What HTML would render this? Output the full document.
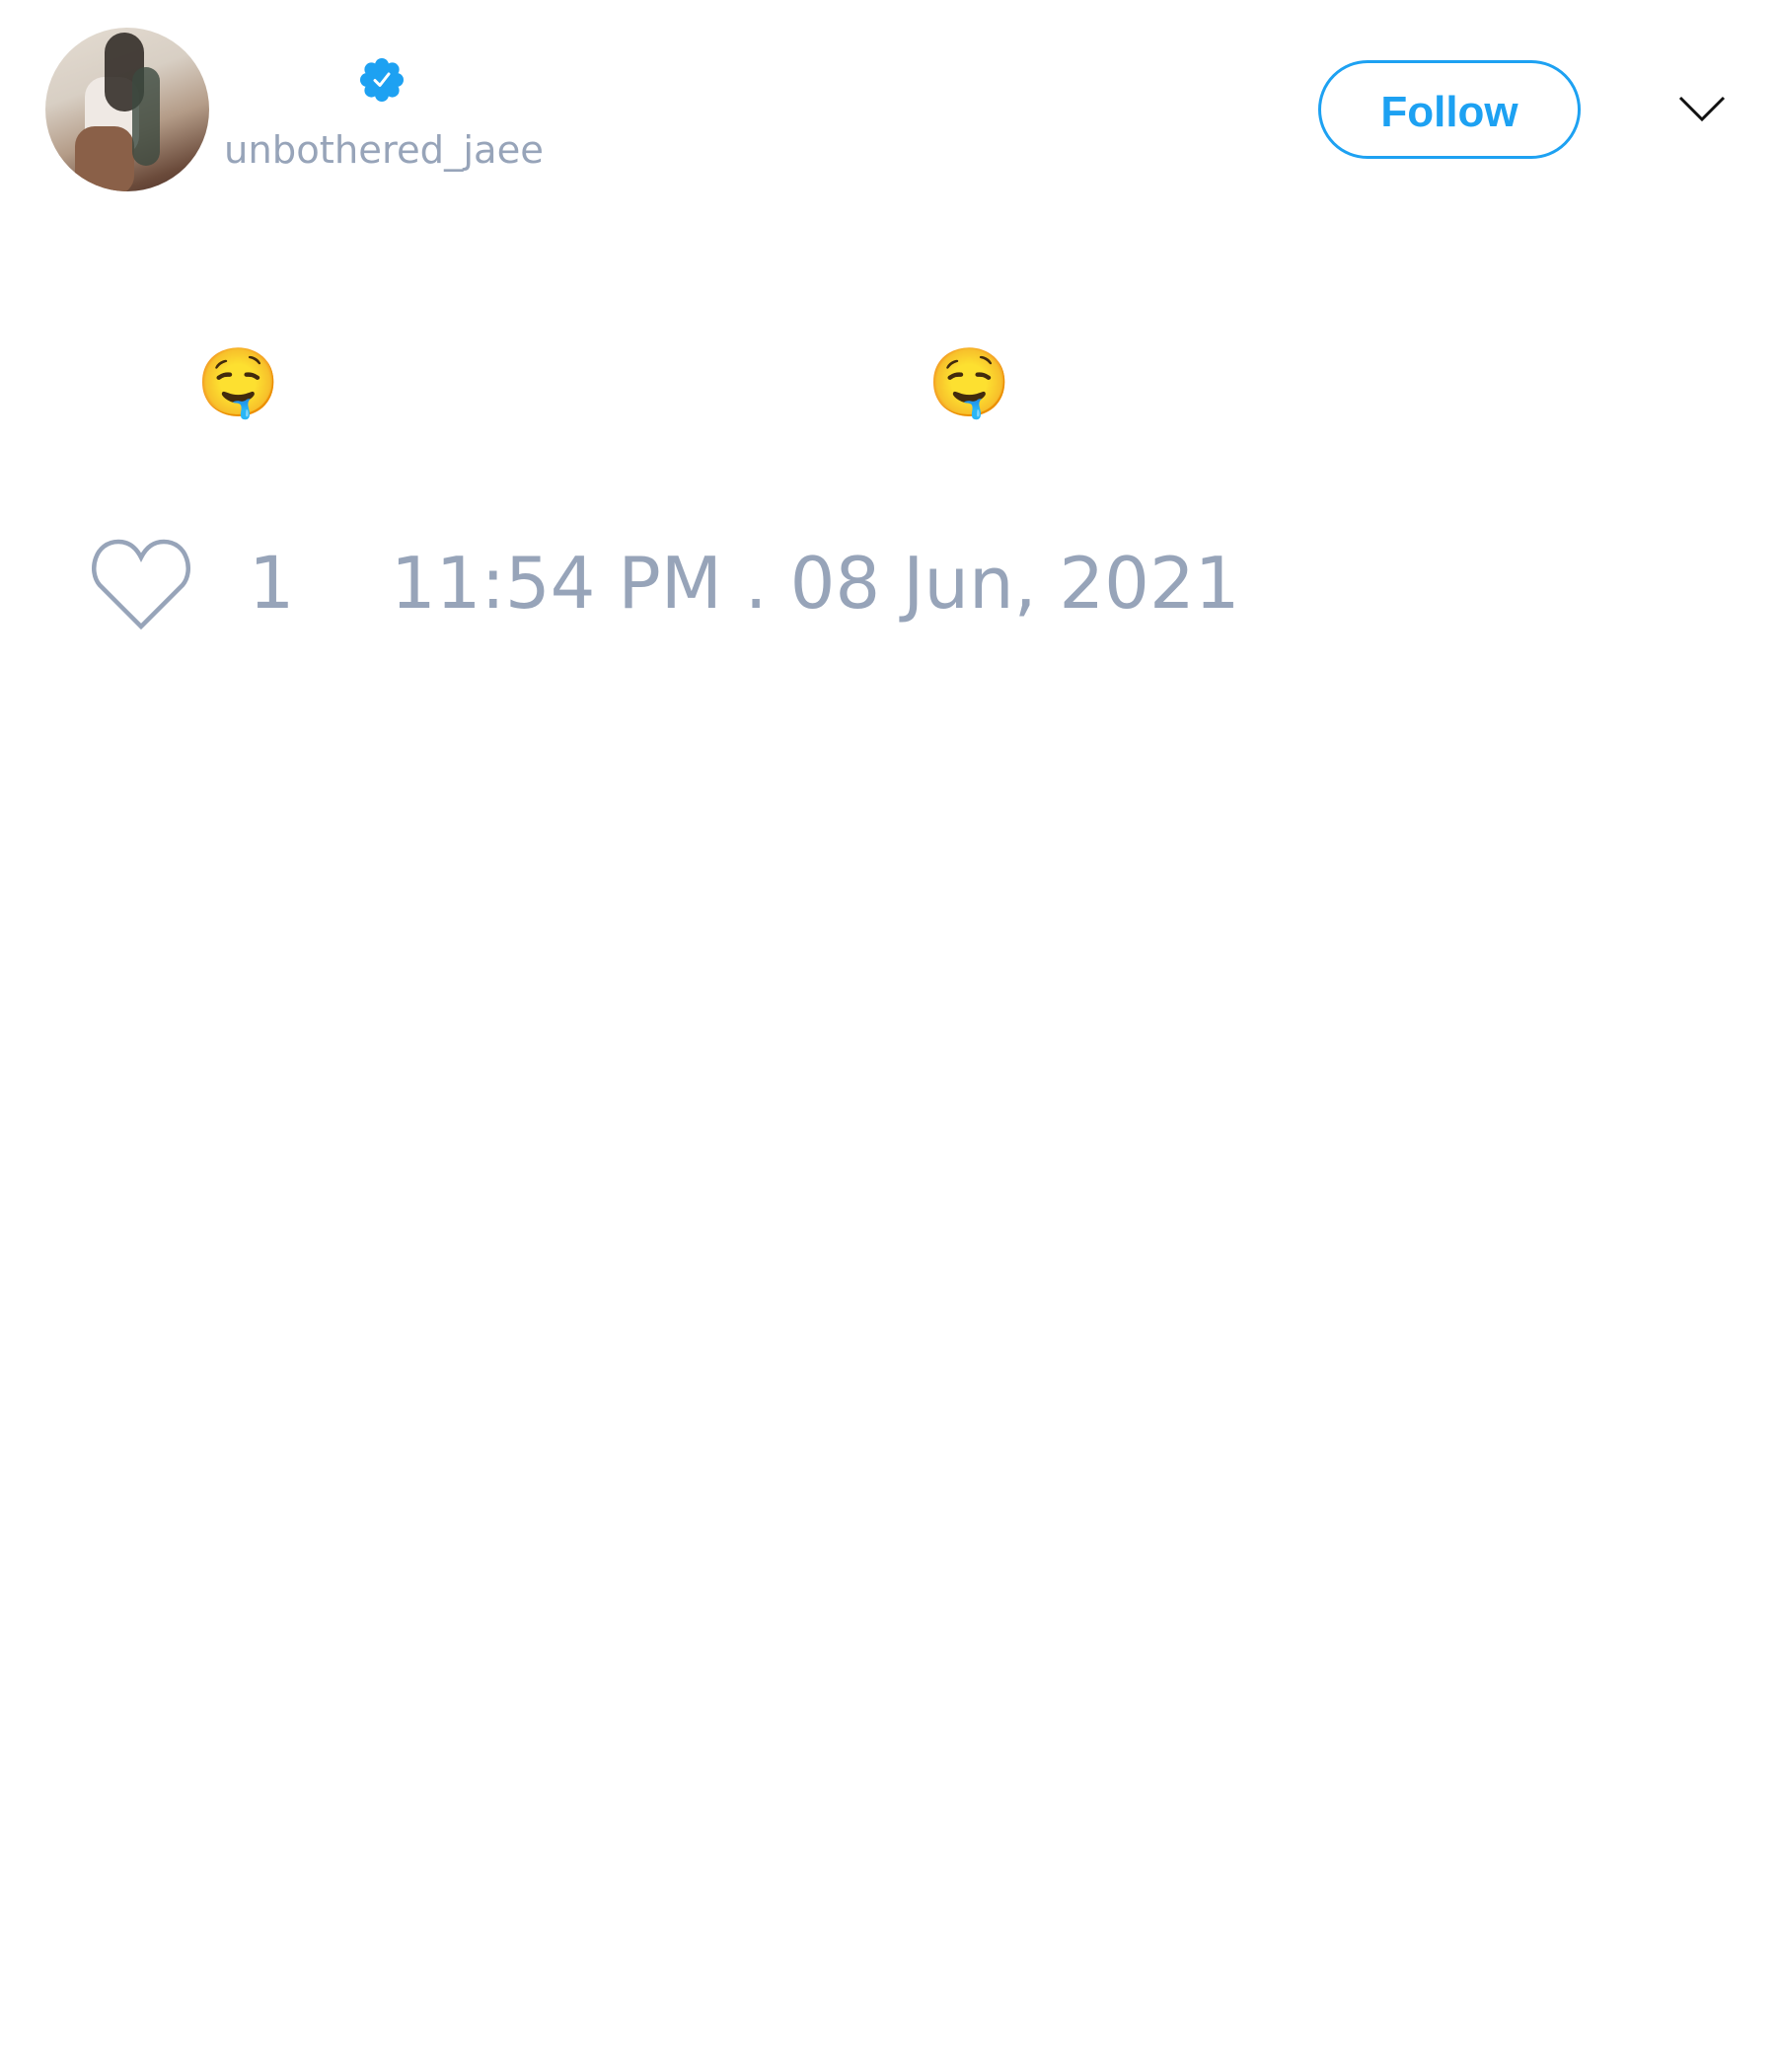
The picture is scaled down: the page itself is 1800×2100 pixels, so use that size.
<!DOCTYPE html>
<html><head><meta charset="utf-8"><style>
html,body{margin:0;padding:0;background:#fff;width:1800px;height:2100px;overflow:hidden;position:relative}
.a{position:absolute}
.t{font-family:"DejaVu Sans","Liberation Sans",sans-serif;color:#97a4b9;white-space:nowrap;line-height:1}
.e{font-family:"Noto Color Emoji","DejaVu Sans",sans-serif;font-size:68px;line-height:1;width:80px;height:80px;text-align:center}
</style></head><body>
<div class="a" style="left:46px;top:28px;width:166px;height:166px;border-radius:50%;overflow:hidden;background:linear-gradient(160deg,#e4dcd2 0%,#d8cfc4 35%,#b49c88 60%,#6a4a3a 85%,#4a2e28 100%)">
<div class="a" style="left:40px;top:50px;width:55px;height:80px;background:#efe9e4;border-radius:20px"></div>
<div class="a" style="left:30px;top:100px;width:60px;height:70px;background:#8a6048;border-radius:20px"></div>
<div class="a" style="left:60px;top:5px;width:40px;height:80px;background:#2a2420;border-radius:20px;opacity:.85"></div>
<div class="a" style="left:88px;top:40px;width:28px;height:100px;background:#3c4a40;border-radius:14px;opacity:.8"></div>
</div>
<svg class="a" style="left:364px;top:58px" width="46" height="46" viewBox="0 0 46 46">
<g fill="#1da1f2"><circle cx="23" cy="23" r="17"/>
<circle cx="23" cy="8" r="7"/><circle cx="23" cy="38" r="7"/><circle cx="8" cy="23" r="7"/><circle cx="38" cy="23" r="7"/>
<circle cx="12.4" cy="12.4" r="7"/><circle cx="33.6" cy="12.4" r="7"/><circle cx="12.4" cy="33.6" r="7"/><circle cx="33.6" cy="33.6" r="7"/></g>
<path d="M16 23.5 L21 28.5 L30 17" fill="none" stroke="#fff" stroke-width="3" stroke-linecap="round" stroke-linejoin="round"/>
</svg>
<div class="a t" style="left:227px;top:134px;font-size:38.5px">unbothered_jaee</div>
<div class="a" style="left:1336px;top:61px;width:260px;height:94px;border:3px solid #1da1f2;border-radius:50px"></div>
<div class="a" style="left:1339px;top:67px;width:260px;height:94px;text-align:center;line-height:94px;font-family:'Liberation Sans',sans-serif;font-weight:bold;font-size:44px;color:#1da1f2">Follow</div>
<svg class="a" style="left:1700px;top:96px" width="50" height="30" viewBox="0 0 50 30"><path d="M3 3 L25 25 L47 3" fill="none" stroke="#111" stroke-width="3"/></svg>
<div class="a e" style="left:199px;top:354px">🤤</div>
<div class="a e" style="left:940px;top:354px">🤤</div>
<svg class="a" style="left:90px;top:545px" width="106" height="94" viewBox="0 0 106 94"><path d="M53 90 L11 48 C-1 34 6 4 30 4 C42 4 49 12 53 20 C57 12 64 4 76 4 C100 4 107 34 95 48 Z" fill="none" stroke="#97a4b9" stroke-width="4.5" stroke-linejoin="miter"/></svg>
<div class="a t" style="left:252px;top:555px;font-size:73px;line-height:1">1</div>
<div class="a t" style="left:396px;top:555px;font-size:72px;line-height:1">11:54 PM . 08 Jun, 2021</div>
</body></html>
